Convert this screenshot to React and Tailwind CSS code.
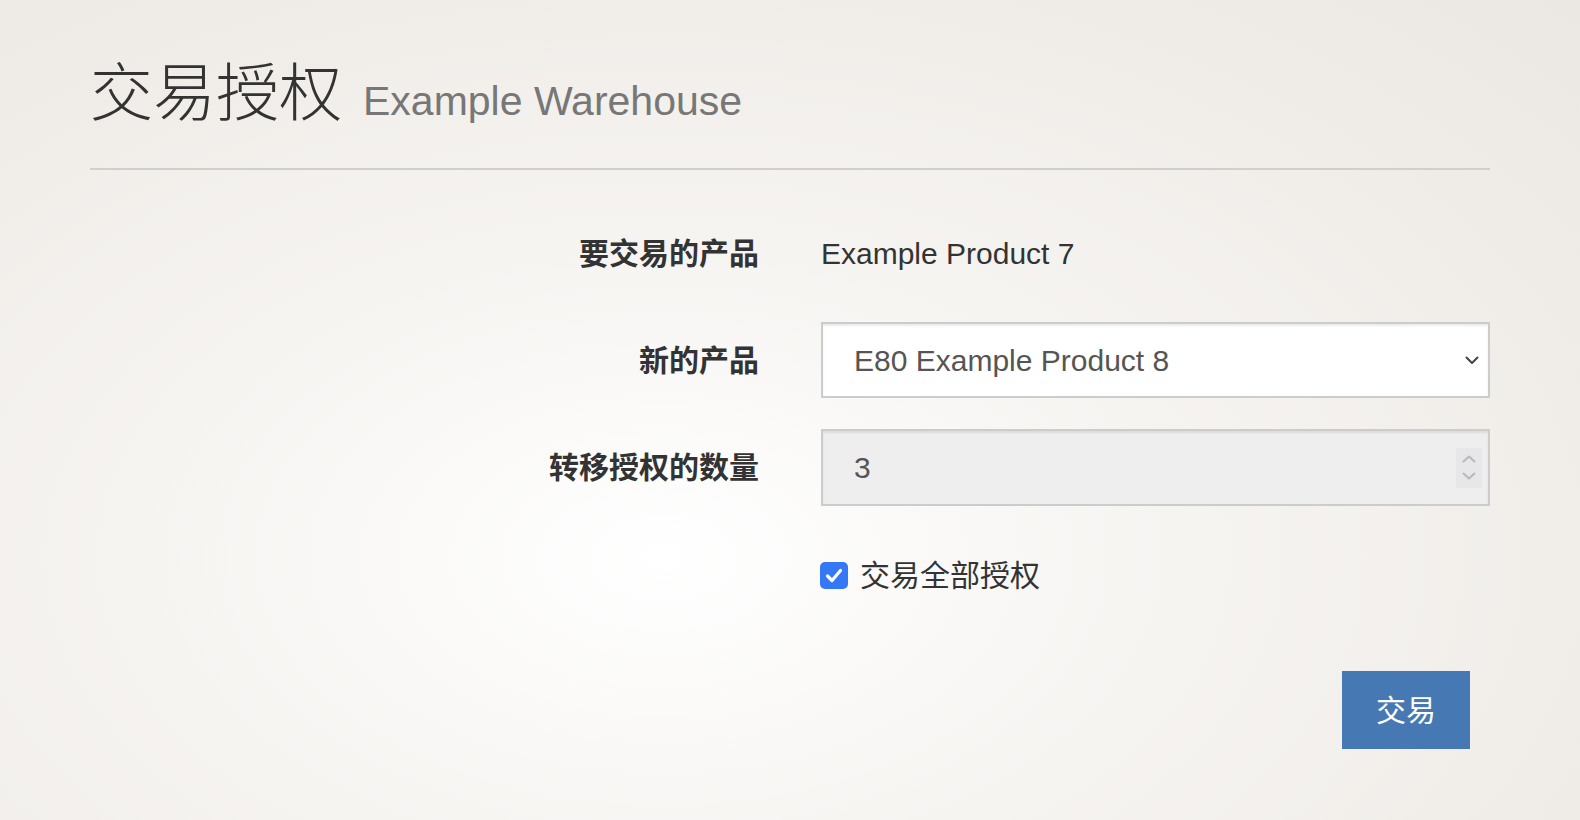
export default function App() {
  const font = { fontFamily: '"Liberation Sans", "Noto Sans CJK SC", sans-serif' };
  return (
    <div
      className="w-[1580px] h-[820px] overflow-hidden px-[90px] text-[#333] bg-[radial-gradient(ellipse_at_42%_68%,#ffffff_0%,#f6f4f1_40%,#ebe7e2_100%)]"
      style={font}
    >
      <div className="h-[170px] border-b-2 border-[#cfcfcf] flex items-baseline pt-[53px] gap-[21px]">
        <h1 className="text-[63px] leading-[80px] font-light text-[#333]">交易授权</h1>
        <span className="text-[41px] leading-[80px] text-[#777]">Example Warehouse</span>
      </div>

      <form className="pt-[45px] flex flex-col gap-[31px]">
        <div className="flex items-center h-[76px]">
          <label className="w-[669px] text-right font-bold text-[30px]">要交易的产品</label>
          <div className="ml-[62px] w-[669px] text-[30px] text-[#333]">Example Product 7</div>
        </div>

        <div className="flex items-center h-[76px]">
          <label className="w-[669px] text-right font-bold text-[30px]">新的产品</label>
          <div className="ml-[62px] w-[669px] h-[76px] bg-white border-2 border-[#cccccc] shadow-[inset_0_2px_2px_rgba(0,0,0,0.075)] flex items-center pl-[31px] pr-[8px]">
            <span className="flex-1 text-[30px] text-[#555]">E80 Example Product 8</span>
            <svg width="14" height="9" viewBox="0 0 14 9" className="mr-[1px]">
              <path d="M1.5 1.5 L7 7 L12.5 1.5" fill="none" stroke="#444" strokeWidth="2" strokeLinecap="round" strokeLinejoin="round" />
            </svg>
          </div>
        </div>

        <div className="flex items-center h-[77px]">
          <label className="w-[669px] text-right font-bold text-[30px]">转移授权的数量</label>
          <div className="ml-[62px] w-[669px] h-[77px] bg-[#eeeeee] border-2 border-[#cccccc] shadow-[inset_0_2px_2px_rgba(0,0,0,0.075)] flex items-center pl-[31px] pr-[6px]">
            <span className="flex-1 text-[30px] text-[#555]">3</span>
            <div className="w-[26px] h-[40px] bg-[#e7e7e9] flex flex-col items-center justify-center gap-[9px]">
              <svg width="14" height="8" viewBox="0 0 14 8">
                <path d="M1.5 6.5 L7 1.5 L12.5 6.5" fill="none" stroke="#b8b8b8" strokeWidth="2" strokeLinecap="round" strokeLinejoin="round" />
              </svg>
              <svg width="14" height="8" viewBox="0 0 14 8">
                <path d="M1.5 1.5 L7 6.5 L12.5 1.5" fill="none" stroke="#b8b8b8" strokeWidth="2" strokeLinecap="round" strokeLinejoin="round" />
              </svg>
            </div>
          </div>
        </div>

        <div className="flex items-center h-[76px]">
          <div className="w-[669px]" />
          <label className="ml-[61px] flex items-center gap-[12px] text-[30px] text-[#333]">
            <span className="w-[28px] h-[27px] rounded-[5px] bg-[#3478f6] flex items-center justify-center">
              <svg width="20" height="17" viewBox="0 0 20 17">
                <path d="M3.5 9 L8 13.5 L16.5 3.5" fill="none" stroke="white" strokeWidth="3.2" strokeLinecap="round" strokeLinejoin="round" />
              </svg>
            </span>
            交易全部授权
          </label>
        </div>

        <div className="flex justify-end pr-[20px] mt-[27px]">
          <button type="button" className="w-[128px] h-[78px] bg-[#4679b3] text-white text-[30px]">交易</button>
        </div>
      </form>
    </div>
  );
}
